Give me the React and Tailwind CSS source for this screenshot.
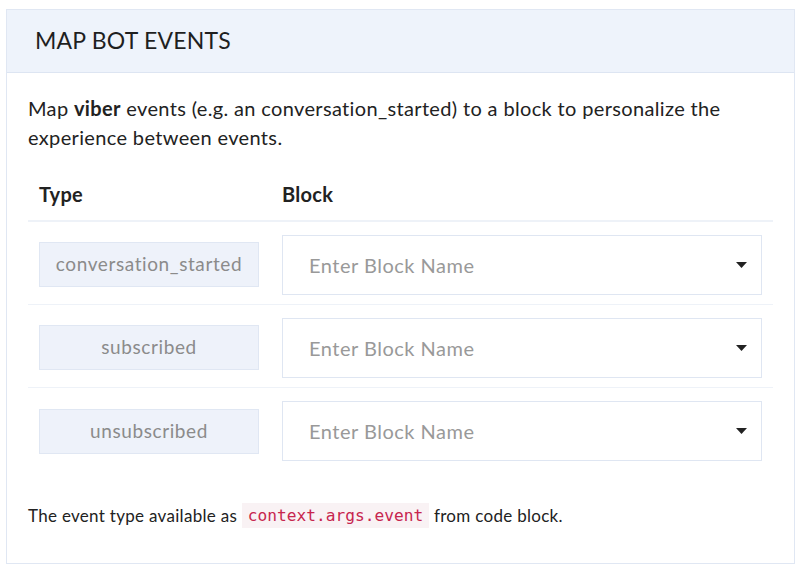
import React from "react";

const rows = ["conversation_started", "subscribed", "unsubscribed"];

function Caret() {
  return (
    <svg width="11" height="6" viewBox="0 0 11 6" className="shrink-0">
      <path d="M0 0 L11 0 L5.5 6 Z" fill="#222" />
    </svg>
  );
}

export default function App() {
  return (
    <div className="w-[800px] h-[569px] bg-white pl-[6px] pt-[9px] font-['Lato',sans-serif] text-[#222]">
      <div className="w-[789px] h-[555px] border border-[#e0e7f3] flex flex-col">
        <div className="h-[63px] shrink-0 bg-[#eef3fb] border-b border-[#dde5f2] flex items-center pl-[28px] pb-[2px]">
          <h1 className="text-[23px] font-normal tracking-[0.2px] text-[#1f1f1f]">MAP BOT EVENTS</h1>
        </div>
        <div className="px-[21px] pt-[21px]">
          <p className="text-[20px] leading-[29px] tracking-[0.35px] text-[#222]">
            Map <b className="font-bold">viber</b> events (e.g. an conversation_started) to a block to personalize the
            experience between events.
          </p>
          <div className="mt-[23px]">
            <div className="flex h-[47px] items-center pb-[7px] border-b-2 border-[#eef2f8]">
              <div className="w-[243px] pl-[11px] text-[20px] font-bold tracking-[0.3px]">Type</div>
              <div className="pl-[11px] text-[20px] font-bold tracking-[0.3px]">Block</div>
            </div>
            {rows.map((r, i) => (
              <div
                key={r}
                className={
                  i < rows.length - 1
                    ? "flex items-center h-[83px] pt-[3px] border-b border-[#eef2f8]"
                    : "flex items-center h-[83px] pt-[3px]"
                }
              >
                <div className="w-[243px] pl-[11px]">
                  <div className="w-[220px] h-[45px] bg-[#eef2fa] border border-[#e0e7f3] flex items-center justify-center text-[19px] tracking-[0.6px] text-[#8b8b8b]">
                    {r}
                  </div>
                </div>
                <div className="pl-[11px]">
                  <div className="w-[480px] h-[60px] border border-[#dfe6f2] bg-white flex items-center justify-between pl-[26px] pr-[14px]">
                    <span className="text-[20px] tracking-[0.5px] text-[#999]">Enter Block Name</span>
                    <Caret />
                  </div>
                </div>
              </div>
            ))}
          </div>
          <div className="mt-[32px] text-[17px] tracking-[0.3px] text-[#222] flex items-center">
            <span>The event type available as&nbsp;</span>
            <code className="font-['DejaVu_Sans_Mono',monospace] text-[16.2px] tracking-normal text-[#c7254e] bg-[#f9f2f4] px-[6px] h-[25px] flex items-center">
              context.args.event
            </code>
            <span>&nbsp;from code block.</span>
          </div>
        </div>
      </div>
    </div>
  );
}
